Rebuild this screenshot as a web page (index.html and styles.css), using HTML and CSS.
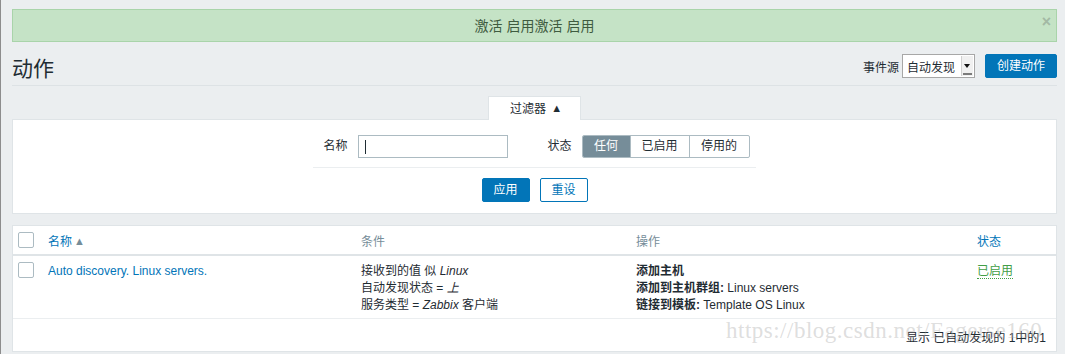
FILE: index.html
```html
<!DOCTYPE html>
<html lang="zh">
<head>
<meta charset="utf-8">
<title>动作</title>
<link rel="stylesheet" href="styles.css">
</head>
<body>
<div class="page">
  <div class="msg">
    <span class="msg-text">激活 启用激活 启用</span>
    <span class="msg-close">×</span>
  </div>

  <header class="header">
    <h1 class="title">动作</h1>
    <div class="controls">
      <label class="ctl-label">事件源</label>
      <div class="select">
        <span class="select-value">自动发现</span>
        <span class="select-arrow"><span class="tri"></span></span>
      </div>
      <button class="btn btn-primary">创建动作</button>
    </div>
  </header>

  <div class="filter">
    <div class="filter-tab">过滤器 <span class="up">▲</span></div>
    <div class="filter-panel">
      <div class="filter-row">
        <span class="f-label">名称</span>
        <div class="input"><span class="caret"></span></div>
        <span class="f-label f-label-state">状态</span>
        <div class="seg">
          <span class="seg-item seg-active">任何</span>
          <span class="seg-item">已启用</span>
          <span class="seg-item">停用的</span>
        </div>
      </div>
      <div class="filter-buttons">
        <button class="btn btn-primary btn-sm">应用</button>
        <button class="btn btn-alt btn-sm">重设</button>
      </div>
    </div>
  </div>

  <div class="list">
    <table class="tbl">
      <colgroup>
        <col class="c1"><col class="c2"><col class="c3"><col class="c4"><col class="c5">
      </colgroup>
      <thead>
        <tr>
          <th><span class="cb"></span></th>
          <th><span class="link">名称</span><span class="sort">▲</span></th>
          <th class="muted">条件</th>
          <th class="muted">操作</th>
          <th><span class="link">状态</span></th>
        </tr>
      </thead>
      <tbody>
        <tr class="row">
          <td><span class="cb"></span></td>
          <td><span class="link">Auto discovery. Linux servers.</span></td>
          <td>
            <div>接收到的值 似 <em>Linux</em></div>
            <div>自动发现状态 = <em>上</em></div>
            <div>服务类型 = <em>Zabbix</em> 客户端</div>
          </td>
          <td>
            <div><b>添加主机</b></div>
            <div><b>添加到主机群组:</b> Linux servers</div>
            <div><b>链接到模板:</b> Template OS Linux</div>
          </td>
          <td><span class="status-on">已启用</span></td>
        </tr>
      </tbody>
    </table>
    <div class="tbl-footer">显示 已自动发现的 1中的1</div>
  </div>
</div>
<div class="watermark">https://blog.csdn.net/Eagerse160</div>
</body>
</html>
```

FILE: styles.css
```css
html, body {
  margin: 0;
  padding: 0;
}
body {
  background: #ebeef0;
  font-family: "Liberation Sans", "Noto Sans CJK SC", sans-serif;
  font-size: 12px;
  color: #1f2c33;
  width: 1065px;
  height: 354px;
  overflow: hidden;
  border-left: 1px solid #8d8d8d;
  box-sizing: border-box;
  position: relative;
}
.page {
  padding: 9px 8px 0 11px;
}

/* message */
.msg {
  position: relative;
  height: 31px;
  background: #c5e3c6;
  border: 1px solid #a9d4aa;
  display: flex;
  align-items: center;
  justify-content: center;
}
.msg-text {
  font-size: 14px;
  color: #3f5b40;
  position: relative;
  top: -1px;
}
.msg-close {
  position: absolute;
  right: 5px;
  top: 3px;
  font-size: 16px;
  color: #a3b9a4;
  font-weight: bold;
}

/* header */
.header {
  display: flex;
  align-items: center;
  justify-content: space-between;
  height: 43px;
  border-bottom: 1px solid #dde2e5;
}
.title {
  margin: 0;
  font-size: 21px;
  font-weight: normal;
  color: #1f2c33;
  padding-top: 6px;
}
.controls {
  display: flex;
  align-items: center;
  padding-top: 5px;
}
.ctl-label {
  margin-right: 3px;
}
.select {
  display: flex;
  align-items: center;
  width: 71px;
  height: 22px;
  border: 1px solid #a7a7a7;
  background: #fff;
  margin-right: 10px;
  box-sizing: content-box;
}
.select-value {
  flex: 1;
  padding-left: 4px;
  font-size: 12px;
}
.select-arrow {
  width: 11px;
  height: 20px;
  margin-right: 1px;
  border-left: 1px solid #d0d0d0;
  background: #f0f0f0;
  display: flex;
  align-items: center;
  justify-content: center;
  position: relative;
}
.tri {
  width: 0;
  height: 0;
  border-left: 3px solid transparent;
  border-right: 3px solid transparent;
  border-top: 4px solid #111;
}
.select-arrow::after {
  content: "";
  position: absolute;
  left: 1px;
  right: 1px;
  bottom: 1px;
  border-bottom: 2px solid #7b7b7b;
}

/* buttons */
.btn {
  font-family: inherit;
  font-size: 12px;
  height: 24px;
  padding: 0 11px;
  border-radius: 2px;
  cursor: pointer;
  line-height: 22px;
  box-sizing: border-box;
}
.btn-primary {
  background: #0275b8;
  border: 1px solid #0275b8;
  color: #fff;
}
.btn-alt {
  background: #fff;
  border: 1px solid #0275b8;
  color: #0275b8;
}
.btn-sm {
  width: 48px;
  padding: 0;
}

/* filter */
.filter {
  display: flex;
  flex-direction: column;
  align-items: center;
  margin-top: 10px;
}
.filter-tab {
  width: 93px;
  height: 24px;
  box-sizing: border-box;
  background: #fff;
  border: 1px solid #dfe4e7;
  border-bottom: none;
  text-align: center;
  line-height: 24px;
  font-size: 12px;
  position: relative;
  z-index: 1;
  margin-bottom: -1px;
  padding-left: 3px;
}
.up {
  font-size: 11px;
  position: relative;
  top: -1px;
  margin-left: 2px;
}
.filter-panel {
  align-self: stretch;
  background: #fff;
  border: 1px solid #dfe4e7;
  height: 95px;
  box-sizing: border-box;
  display: flex;
  flex-direction: column;
  align-items: center;
  padding-top: 15px;
}
.filter-row {
  width: 443px;
  height: 33px;
  border-bottom: 1px solid #ebeef0;
  display: flex;
  align-items: flex-start;
  justify-content: center;
  padding-left: 4px;
  box-sizing: border-box;
}
.f-label {
  height: 23px;
  line-height: 23px;
  margin-right: 10px;
}
.f-label-state {
  margin-left: 40px;
}
.input {
  width: 150px;
  height: 23px;
  box-sizing: border-box;
  border: 1px solid #acbbc2;
  background: #fff;
  position: relative;
}
.caret {
  position: absolute;
  left: 6px;
  top: 4px;
  width: 1px;
  height: 14px;
  background: #1f2c33;
}
.seg {
  display: flex;
  height: 23px;
  border: 1px solid #acbbc2;
  border-radius: 2px;
  box-sizing: border-box;
  overflow: hidden;
}
.seg-item {
  line-height: 21px;
  text-align: center;
  color: #1f2c33;
  border-left: 1px solid #acbbc2;
}
.seg-item:nth-child(1) { width: 47px; border-left: none; }
.seg-item:nth-child(2) { width: 58px; }
.seg-item:nth-child(3) { width: 59px; }
.seg-active {
  background: #768d99;
  color: #fff;
}
.filter-buttons {
  display: flex;
  gap: 10px;
  margin-top: 10px;
}

/* table */
.list {
  margin-top: 11px;
  background: #fff;
  border: 1px solid #dfe4e7;
  height: 127px;
  box-sizing: border-box;
}
.tbl {
  width: 100%;
  border-collapse: collapse;
  table-layout: fixed;
}
.c1 { width: 30px; }
.c2 { width: 313px; }
.c3 { width: 275px; }
.c4 { width: 341px; }
.c5 { width: 84px; }
.tbl th {
  text-align: left;
  font-weight: normal;
  height: 28px;
  padding: 0 0 0 5px;
  border-bottom: 2px solid #dfe4e7;
  vertical-align: middle;
}
.tbl td {
  padding: 7px 0 3px 5px;
  vertical-align: top;
  border-bottom: 1px solid #ebeef0;
  line-height: 17px;
  height: 52px;
}
.muted { color: #768d99; }
.link { color: #0275b8; }
.sort {
  color: #768d99;
  font-size: 11px;
  margin-left: 2px;
  position: relative;
  top: -1px;
}
.cb {
  display: block;
  width: 16px;
  height: 16px;
  box-sizing: border-box;
  border: 1px solid #acbbc2;
  border-radius: 2px;
  background: #fff;
}
.tbl td .cb { margin-top: -1px; }
em { font-style: italic; }
b { font-weight: bold; }
.status-on {
  color: #429e47;
  border-bottom: 1px dotted #429e47;
}
.tbl-footer {
  text-align: right;
  padding: 9px 10px 0 0;
  color: #1f2c33;
}

/* watermark overlay */
.watermark {
  position: absolute;
  left: 725px;
  top: 318px;
  font-family: "Liberation Serif", serif;
  font-size: 23px;
  letter-spacing: 0.5px;
  color: rgba(170, 170, 170, 0.4);
  pointer-events: none;
  white-space: nowrap;
}
```
